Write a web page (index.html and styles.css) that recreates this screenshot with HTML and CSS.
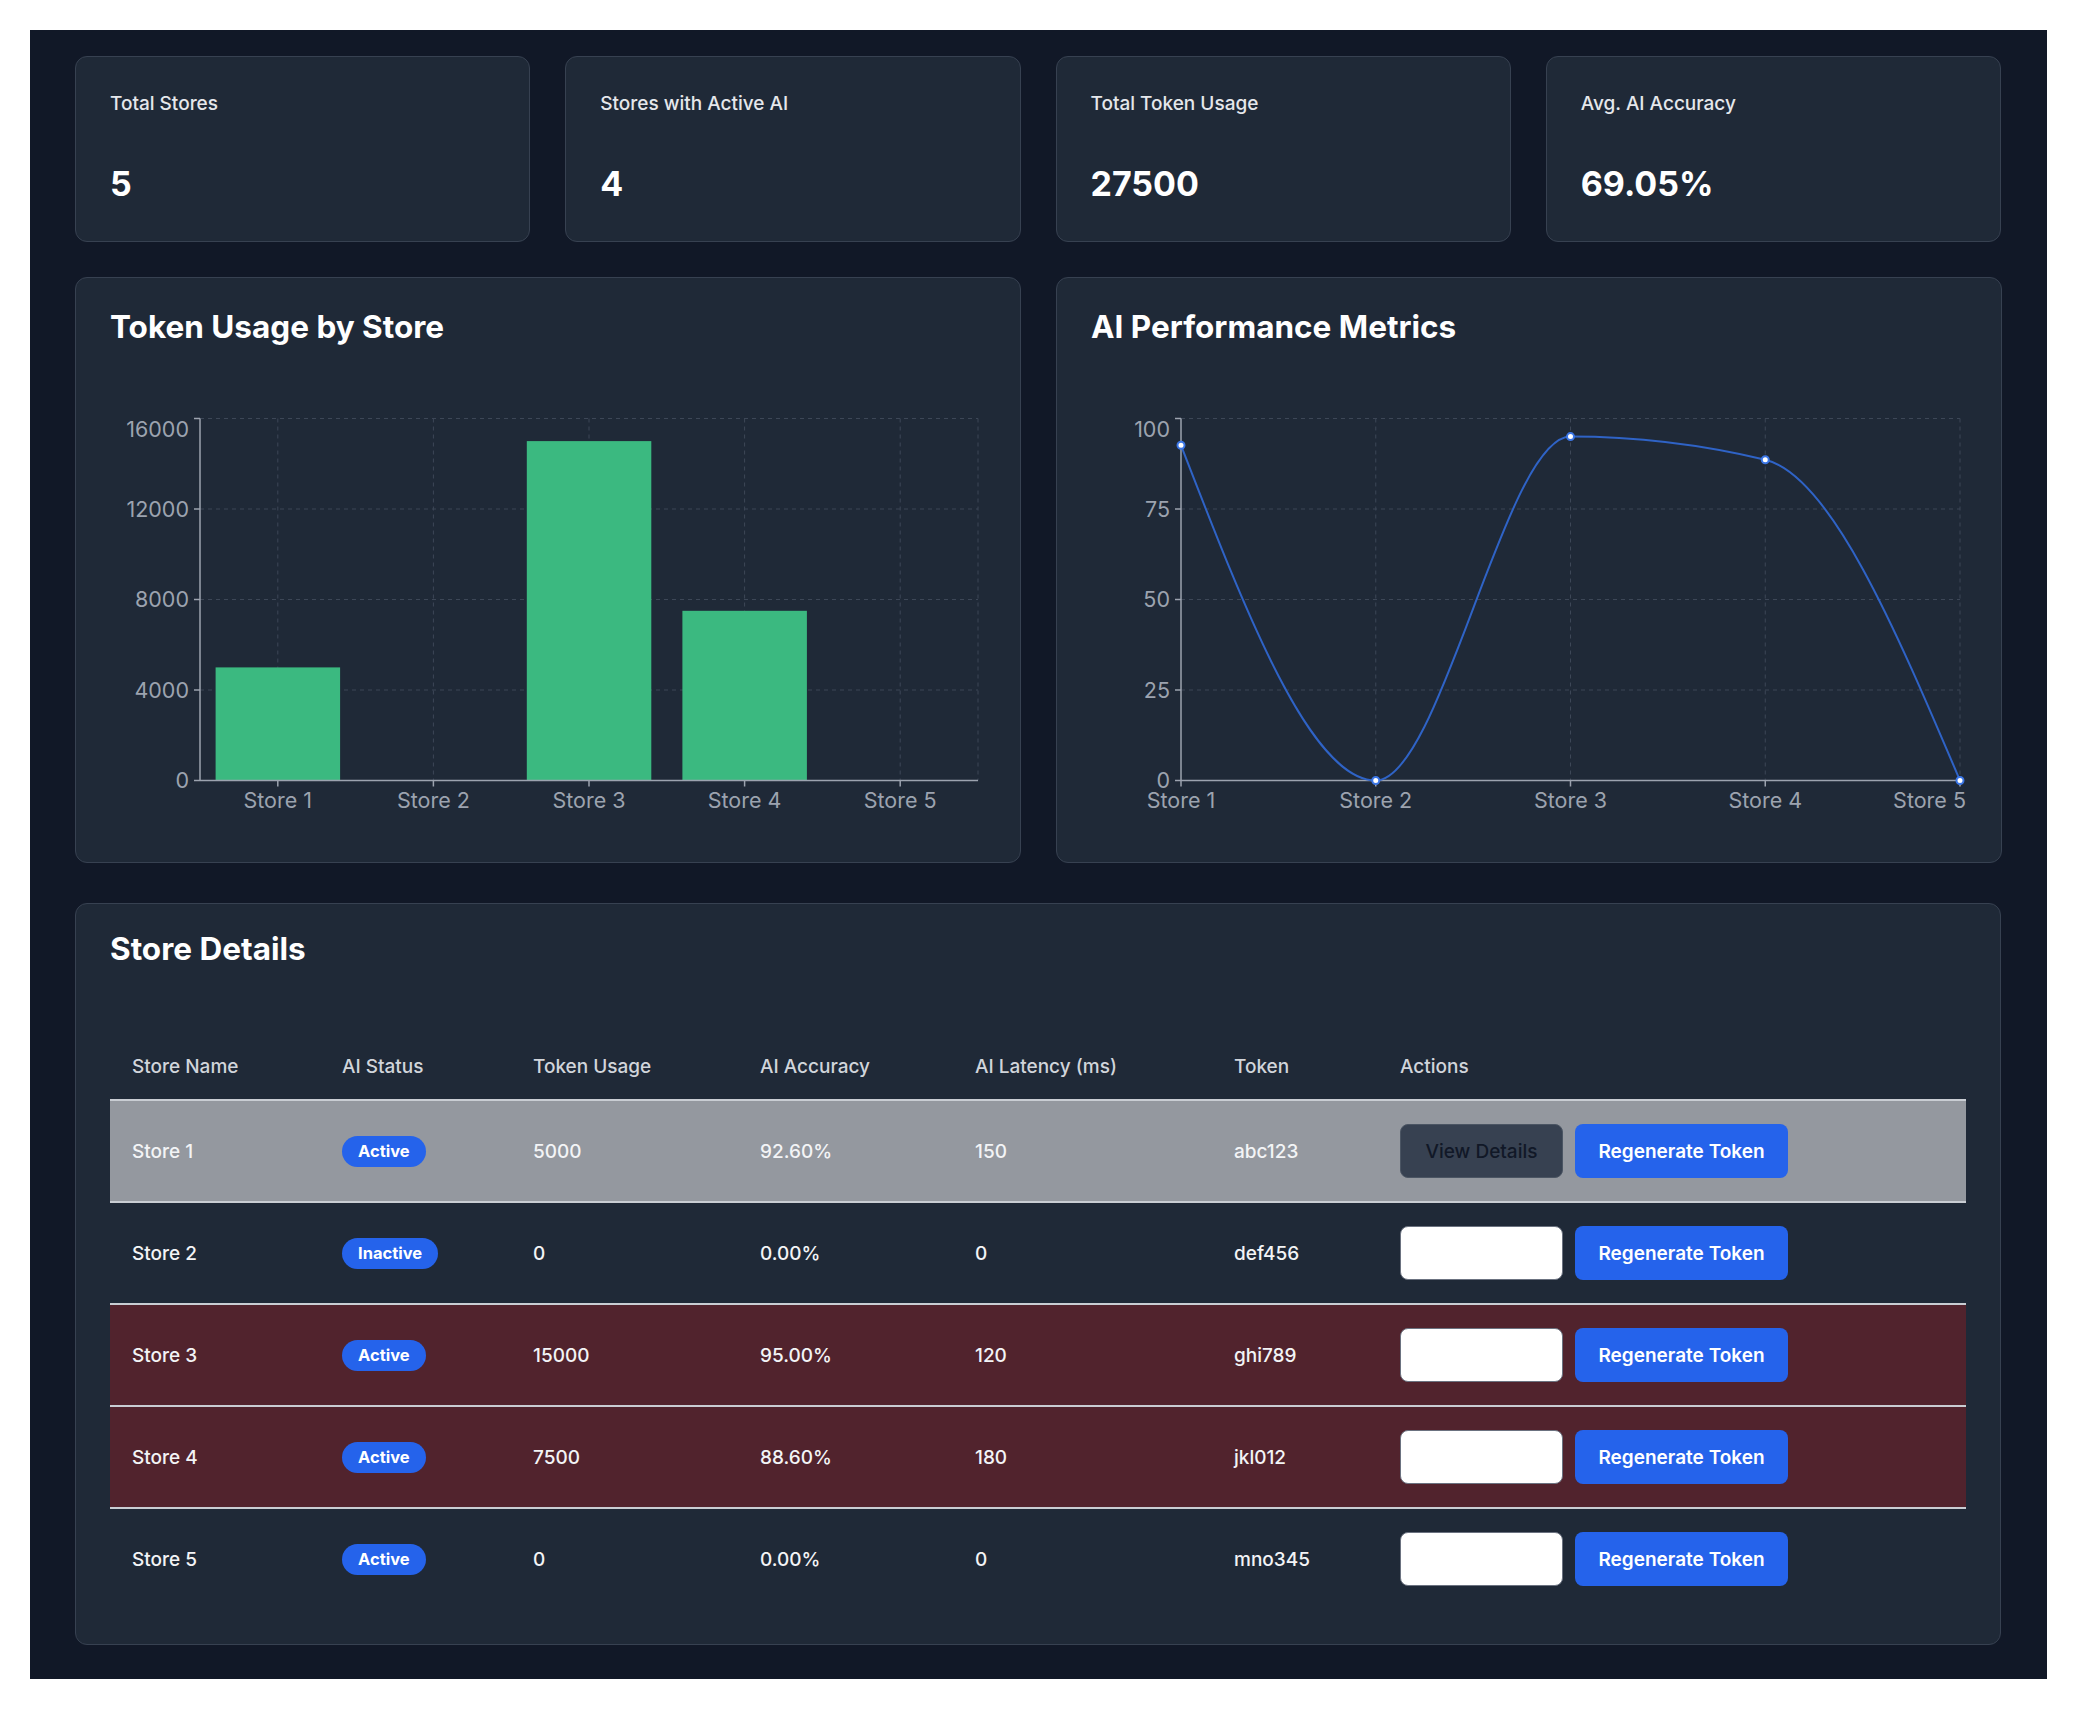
FILE: index.html
```html
<!DOCTYPE html>
<html lang="en">
<head>
<meta charset="utf-8">
<title>AI Store Dashboard</title>
<link rel="stylesheet" href="styles.css">
</head>
<body>
<div class="page">
  <main class="dashboard">
    <section class="stats">
      <div class="card stat">
        <div class="stat-label">Total Stores</div>
        <div class="stat-value">5</div>
      </div>
      <div class="card stat">
        <div class="stat-label">Stores with Active AI</div>
        <div class="stat-value">4</div>
      </div>
      <div class="card stat">
        <div class="stat-label">Total Token Usage</div>
        <div class="stat-value">27500</div>
      </div>
      <div class="card stat">
        <div class="stat-label">Avg. AI Accuracy</div>
        <div class="stat-value">69.05%</div>
      </div>
    </section>

    <section class="charts">
      <div class="card chart-card">
        <h2 class="card-title">Token Usage by Store</h2>
        <svg class="chart" width="876" height="482" viewBox="0 0 876 482">
          <g class="grid">
            <line x1="90" y1="73.5" x2="868" y2="73.5"/>
            <line x1="90" y1="164" x2="868" y2="164"/>
            <line x1="90" y1="254.5" x2="868" y2="254.5"/>
            <line x1="90" y1="345" x2="868" y2="345"/>
            <line x1="167.8" y1="73.5" x2="167.8" y2="435.5"/>
            <line x1="323.4" y1="73.5" x2="323.4" y2="435.5"/>
            <line x1="479" y1="73.5" x2="479" y2="435.5"/>
            <line x1="634.6" y1="73.5" x2="634.6" y2="435.5"/>
            <line x1="790.2" y1="73.5" x2="790.2" y2="435.5"/>
            <line x1="868" y1="73.5" x2="868" y2="435.5"/>
          </g>
          <g class="bars">
            <rect x="105.6" y="322.4" width="124.5" height="113.1"/>
            <rect x="416.8" y="96.1" width="124.5" height="339.4"/>
            <rect x="572.4" y="265.8" width="124.5" height="169.7"/>
          </g>
          <g class="axis">
            <line x1="90" y1="73.5" x2="90" y2="435.5"/>
            <line x1="90" y1="435.5" x2="868" y2="435.5"/>
            <line x1="84" y1="73.5" x2="90" y2="73.5"/>
            <line x1="84" y1="164" x2="90" y2="164"/>
            <line x1="84" y1="254.5" x2="90" y2="254.5"/>
            <line x1="84" y1="345" x2="90" y2="345"/>
            <line x1="84" y1="435.5" x2="90" y2="435.5"/>
            <line x1="167.8" y1="435.5" x2="167.8" y2="441.5"/>
            <line x1="323.4" y1="435.5" x2="323.4" y2="441.5"/>
            <line x1="479" y1="435.5" x2="479" y2="441.5"/>
            <line x1="634.6" y1="435.5" x2="634.6" y2="441.5"/>
            <line x1="790.2" y1="435.5" x2="790.2" y2="441.5"/>
          </g>
          <g class="ylabels">
            <text x="79" y="92">16000</text>
            <text x="79" y="171.5">12000</text>
            <text x="79" y="262">8000</text>
            <text x="79" y="352.5">4000</text>
            <text x="79" y="443">0</text>
          </g>
          <g class="xlabels">
            <text x="167.8" y="463">Store 1</text>
            <text x="323.4" y="463">Store 2</text>
            <text x="479" y="463">Store 3</text>
            <text x="634.6" y="463">Store 4</text>
            <text x="790.2" y="463">Store 5</text>
          </g>
        </svg>
      </div>

      <div class="card chart-card">
        <h2 class="card-title">AI Performance Metrics</h2>
        <svg class="chart" width="876" height="482" viewBox="0 0 876 482">
          <g class="grid">
            <line x1="90" y1="73.5" x2="869" y2="73.5"/>
            <line x1="90" y1="164" x2="869" y2="164"/>
            <line x1="90" y1="254.5" x2="869" y2="254.5"/>
            <line x1="90" y1="345" x2="869" y2="345"/>
            <line x1="284.75" y1="73.5" x2="284.75" y2="435.5"/>
            <line x1="479.5" y1="73.5" x2="479.5" y2="435.5"/>
            <line x1="674.25" y1="73.5" x2="674.25" y2="435.5"/>
            <line x1="869" y1="73.5" x2="869" y2="435.5"/>
          </g>
          <g class="axis">
            <line x1="90" y1="73.5" x2="90" y2="435.5"/>
            <line x1="90" y1="435.5" x2="869" y2="435.5"/>
            <line x1="84" y1="73.5" x2="90" y2="73.5"/>
            <line x1="84" y1="164" x2="90" y2="164"/>
            <line x1="84" y1="254.5" x2="90" y2="254.5"/>
            <line x1="84" y1="345" x2="90" y2="345"/>
            <line x1="84" y1="435.5" x2="90" y2="435.5"/>
            <line x1="90" y1="435.5" x2="90" y2="441.5"/>
            <line x1="284.75" y1="435.5" x2="284.75" y2="441.5"/>
            <line x1="479.5" y1="435.5" x2="479.5" y2="441.5"/>
            <line x1="674.25" y1="435.5" x2="674.25" y2="441.5"/>
            <line x1="869" y1="435.5" x2="869" y2="441.5"/>
          </g>
          <path class="curve" d="M90,100.3 C154.92,267.9 219.83,435.5 284.75,435.5 C349.67,435.5 414.58,91.6 479.5,91.6 C544.42,91.6 609.33,99.33 674.25,114.8 C739.17,130.27 804.08,282.9 869,435.5"/>
          <g class="dots">
            <circle cx="90" cy="100.3" r="3.5"/>
            <circle cx="284.75" cy="435.5" r="3.5"/>
            <circle cx="479.5" cy="91.6" r="3.5"/>
            <circle cx="674.25" cy="114.8" r="3.5"/>
            <circle cx="869" cy="435.5" r="3.5"/>
          </g>
          <g class="ylabels">
            <text x="79" y="92">100</text>
            <text x="79" y="171.5">75</text>
            <text x="79" y="262">50</text>
            <text x="79" y="352.5">25</text>
            <text x="79" y="443">0</text>
          </g>
          <g class="xlabels">
            <text x="90" y="463">Store 1</text>
            <text x="284.75" y="463">Store 2</text>
            <text x="479.5" y="463">Store 3</text>
            <text x="674.25" y="463">Store 4</text>
            <text class="end" x="875" y="463">Store 5</text>
          </g>
        </svg>
      </div>
    </section>

    <section class="card table-card">
      <h2 class="card-title table-title">Store Details</h2>
      <table class="stores">
        <thead>
          <tr>
            <th class="c-name">Store Name</th>
            <th class="c-status">AI Status</th>
            <th class="c-usage">Token Usage</th>
            <th class="c-acc">AI Accuracy</th>
            <th class="c-lat">AI Latency (ms)</th>
            <th class="c-token">Token</th>
            <th class="c-actions">Actions</th>
          </tr>
        </thead>
        <tbody>
          <tr class="row-selected">
            <td>Store 1</td>
            <td><span class="badge">Active</span></td>
            <td>5000</td>
            <td>92.60%</td>
            <td>150</td>
            <td>abc123</td>
            <td><div class="actions"><button class="btn btn-view">View Details</button><button class="btn btn-primary">Regenerate Token</button></div></td>
          </tr>
          <tr>
            <td>Store 2</td>
            <td><span class="badge">Inactive</span></td>
            <td>0</td>
            <td>0.00%</td>
            <td>0</td>
            <td>def456</td>
            <td><div class="actions"><button class="btn btn-light">View Details</button><button class="btn btn-primary">Regenerate Token</button></div></td>
          </tr>
          <tr class="row-alert">
            <td>Store 3</td>
            <td><span class="badge">Active</span></td>
            <td>15000</td>
            <td>95.00%</td>
            <td>120</td>
            <td>ghi789</td>
            <td><div class="actions"><button class="btn btn-light">View Details</button><button class="btn btn-primary">Regenerate Token</button></div></td>
          </tr>
          <tr class="row-alert">
            <td>Store 4</td>
            <td><span class="badge">Active</span></td>
            <td>7500</td>
            <td>88.60%</td>
            <td>180</td>
            <td>jkl012</td>
            <td><div class="actions"><button class="btn btn-light">View Details</button><button class="btn btn-primary">Regenerate Token</button></div></td>
          </tr>
          <tr>
            <td>Store 5</td>
            <td><span class="badge">Active</span></td>
            <td>0</td>
            <td>0.00%</td>
            <td>0</td>
            <td>mno345</td>
            <td><div class="actions"><button class="btn btn-light">View Details</button><button class="btn btn-primary">Regenerate Token</button></div></td>
          </tr>
        </tbody>
      </table>
    </section>
  </main>
</div>
</body>
</html>
```

FILE: styles.css
```css
* { box-sizing: border-box; }

html, body {
  margin: 0;
  padding: 0;
  background: #ffffff;
  font-family: Inter, "Noto Sans", "Liberation Sans", sans-serif;
}

.page {
  padding: 30px 29px 0 30px;
}

.dashboard {
  background: #111827;
  padding: 26px 46px 34px 45px;
  display: flex;
  flex-direction: column;
  gap: 35px;
}

.card {
  background: #1f2937;
  border: 1px solid #374151;
  border-radius: 12px;
}

/* stat cards */
.stats {
  display: grid;
  grid-template-columns: repeat(4, 1fr);
  gap: 35px;
}

.stat {
  padding: 33px 34px 36px;
  height: 186px;
}

.stat-label {
  font-size: 19px;
  line-height: 28px;
  font-weight: 500;
  color: #e5e7eb;
}

.stat-value {
  margin-top: 46px;
  font-size: 34px;
  line-height: 40px;
  font-weight: 700;
  color: #ffffff;
}

/* charts */
.charts {
  display: grid;
  grid-template-columns: 1fr 1fr;
  gap: 35px;
}

.chart-card {
  height: 586px;
  padding: 30px 34px 35px;
}

.card-title {
  margin: 0;
  font-size: 31.5px;
  line-height: 37px;
  font-weight: 700;
  color: #ffffff;
}

.chart {
  display: block;
  overflow: visible;
}

.chart .grid line {
  stroke: #3d4757;
  stroke-width: 1;
  stroke-dasharray: 4 4;
}

.chart .axis line {
  stroke: #9ca3af;
  stroke-width: 1.5;
}

.chart .bars rect {
  fill: #3bb980;
}

.chart text {
  font-family: Inter, "Noto Sans", sans-serif;
  font-size: 21.5px;
  fill: #9ca3af;
}

.chart .ylabels text {
  text-anchor: end;
}

.chart .xlabels text {
  text-anchor: middle;
}

.chart .xlabels text.end {
  text-anchor: end;
}

.chart .curve {
  fill: none;
  stroke: #2f63c6;
  stroke-width: 2;
}

.chart .dots circle {
  fill: #ffffff;
  stroke: #3b76e6;
  stroke-width: 2;
}

/* table */
.table-card {
  margin-top: 5px;
  height: 742px;
  padding: 26px 34px 35px;
}

.table-title {
  margin-bottom: 57px;
}

.stores {
  width: 100%;
  border-collapse: collapse;
  table-layout: fixed;
  font-size: 19px;
  line-height: 29px;
}

.stores th {
  text-align: left;
  font-weight: 500;
  color: #d1d5db;
  padding: 28px 22px 18px;
  border-bottom: 2px solid #c9cdd3;
}

.stores td {
  padding: 23px 22px;
  font-weight: 500;
  color: #f3f4f6;
  height: 100px;
  white-space: nowrap;
}

.stores tbody tr {
  border-bottom: 2px solid #c9cdd3;
}

.stores tbody tr:last-child {
  border-bottom: none;
}

.c-name { width: 210px; }
.c-status { width: 191px; }
.c-usage { width: 227px; }
.c-acc { width: 215px; }
.c-lat { width: 259px; }
.c-token { width: 166px; }
.c-actions { width: auto; }

.row-selected {
  background: #94989f;
}

.row-alert {
  background: #51232d;
}

.badge {
  display: inline-block;
  background: #2563eb;
  color: #ffffff;
  font-size: 16.5px;
  line-height: 31px;
  height: 31px;
  font-weight: 700;
  padding: 0 16px;
  border-radius: 16px;
  vertical-align: middle;
}

.actions {
  display: flex;
  gap: 12px;
}

.btn {
  height: 54px;
  padding: 0 23px;
  border: none;
  border-radius: 8px;
  font-family: Inter, "Noto Sans", sans-serif;
  font-size: 19px;
  font-weight: 500;
  cursor: pointer;
}

.btn-view {
  width: 163px;
  background: #374151;
  color: #111827;
  border: 1px solid #4b5563;
}

.btn-light {
  width: 163px;
  background: #ffffff;
  color: #ffffff;
  border: 1px solid #6b7280;
}

.btn-primary {
  width: 213px;
  background: #2563eb;
  color: #ffffff;
  font-weight: 600;
}
```
